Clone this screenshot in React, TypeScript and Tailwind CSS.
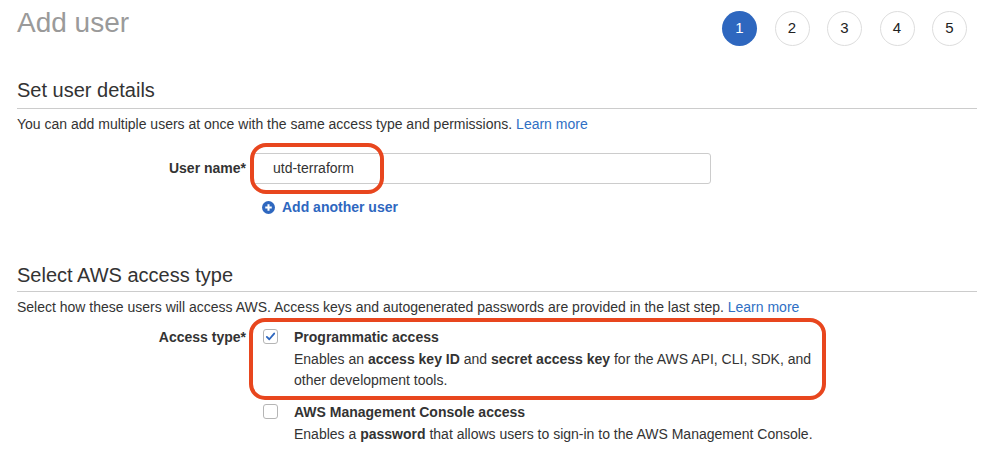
const steps = [1, 2, 3, 4, 5];

function StepCircle({ n, active }: { n: number; active?: boolean }) {
  return (
    <li
      className={`w-[35px] h-[35px] rounded-full flex items-center justify-center text-[15px] ${
        active ? 'bg-[#2e67bf] text-white' : 'bg-white border border-[#dddddd] text-[#222]'
      }`}
    >
      {n}
    </li>
  );
}

function Checkbox({ checked }: { checked?: boolean }) {
  return (
    <span className="w-[15px] h-[15px] rounded-[3px] border border-[#b5b5b5] bg-white flex items-center justify-center shrink-0 mt-[2px]">
      {checked && (
        <svg viewBox="0 0 12 12" className="w-[11px] h-[11px]">
          <path d="M2 6.4 L4.7 9 L10 2.8" fill="none" stroke="#2e67bf" strokeWidth="2" strokeLinecap="round" strokeLinejoin="round" />
        </svg>
      )}
    </span>
  );
}

function SectionHeading({ children, pb }: { children: React.ReactNode; pb: string }) {
  return (
    <h2 className={`text-[20px] leading-[24px] text-[#333] border-b border-[#cccccc] ${pb}`}>{children}</h2>
  );
}

export default function App() {
  return (
    <div className="relative w-[994px] h-[468px] bg-white px-[17px] overflow-hidden text-[14px] text-[#333]" style={{ fontFamily: '"Liberation Sans", Arial, sans-serif' }}>
      {/* header */}
      <div className="flex justify-between items-start">
        <h1 className="mt-[6px] text-[28px] leading-[34px] text-[#9a9a9a]">Add user</h1>
        <ul className="flex gap-[17.5px] mt-[11px] mr-[10px]">
          {steps.map((s) => (
            <StepCircle key={s} n={s} active={s === 1} />
          ))}
        </ul>
      </div>

      {/* set user details */}
      <div className="mt-[32px]">
        <SectionHeading pb="pb-[6px]">Set user details</SectionHeading>
        <p className="mt-[5px] leading-[20px]">
          You can add multiple users at once with the same access type and permissions.{' '}
          <span className="text-[#2f6fc4]">Learn more</span>
        </p>

        <div className="flex items-center mt-[19px]">
          <label className="w-[229px] text-right font-bold text-[#333]">User name*</label>
          <div className="ml-[5px] w-[460px] h-[31px] border border-[#cccccc] rounded-[3px] flex items-center pl-[21px] text-[#333]">
            utd-terraform
          </div>
        </div>

        <div className="flex items-center ml-[245px] mt-[13px] leading-[20px] gap-[7px] text-[#2e67bf] font-bold">
          <svg viewBox="0 0 14 14" className="w-[13px] h-[13px]">
            <circle cx="7" cy="7" r="7" fill="#2e67bf" />
            <path d="M7 3.5 V10.5 M3.5 7 H10.5" stroke="white" strokeWidth="2.2" />
          </svg>
          Add another user
        </div>
      </div>

      {/* access type */}
      <div className="mt-[46px]">
        <SectionHeading pb="pb-[4px]">Select AWS access type</SectionHeading>
        <p className="mt-[5px] leading-[20px]">
          Select how these users will access AWS. Access keys and autogenerated passwords are provided in the last step.{' '}
          <span className="text-[#2f6fc4]">Learn more</span>
        </p>

        <div className="flex mt-[10px]">
          <label className="w-[229px] text-right font-bold leading-[20px]">Access type*</label>
          <div className="ml-[17px] flex flex-col">
            <div className="flex gap-[16px]">
              <Checkbox checked />
              <div className="w-[540px]">
                <div className="font-bold leading-[20px]">Programmatic access</div>
                <p className="mt-[2px] leading-[21px]">
                  Enables an <b>access key ID</b> and <b>secret access key</b> for the AWS API, CLI, SDK, and other development tools.
                </p>
              </div>
            </div>
            <div className="flex gap-[16px] mt-[11px]">
              <Checkbox />
              <div className="w-[600px]">
                <div className="font-bold leading-[20px]">AWS Management Console access</div>
                <p className="mt-[2px] leading-[21px]">
                  Enables a <b>password</b> that allows users to sign-in to the AWS Management Console.
                </p>
              </div>
            </div>
          </div>
        </div>
      </div>

      {/* annotations */}
      <div className="absolute left-[250px] top-[143px] w-[134px] h-[51px] border-[4px] border-[#e8461e] rounded-[16px] pointer-events-none" />
      <div className="absolute left-[249px] top-[318px] w-[577px] h-[82px] border-[4px] border-[#e8461e] rounded-[16px] pointer-events-none" />
    </div>
  );
}
